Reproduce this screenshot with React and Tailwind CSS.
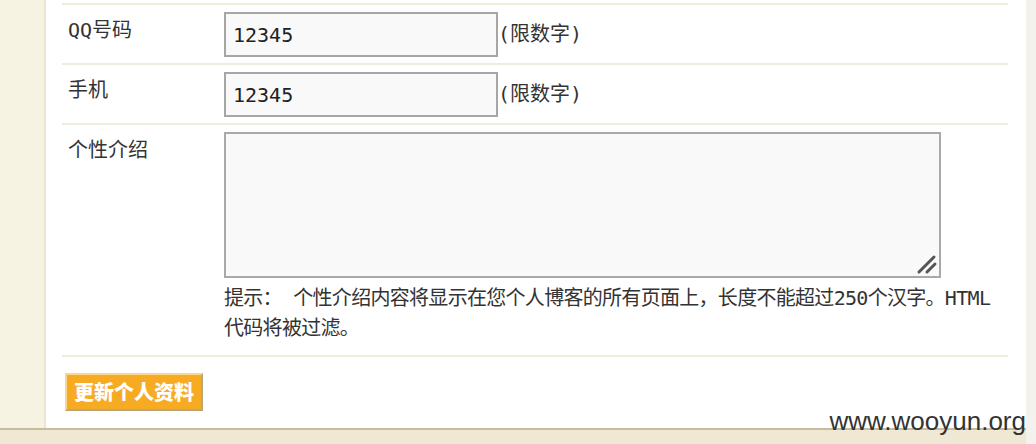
import React from 'react';

const font = { fontFamily: '"DejaVu Sans Mono", "Noto Sans CJK SC", monospace' };

function FieldRow({ label, children, last }) {
  return (
    <div className={`flex border-t-2 border-[#f0ecdc] ${last ? 'border-b-2' : ''}`}>
      <div className="w-[162px] shrink-0 pl-[6px] pt-[12px] text-[20px] leading-[26px] text-[#333]">
        {label}
      </div>
      <div className="flex-1 min-w-0">{children}</div>
    </div>
  );
}

function NumberField({ value }) {
  return (
    <div className="flex items-center pt-[7px] pb-[6px]">
      <input
        readOnly
        value={value}
        className="w-[274px] h-[45px] border-2 border-[#a6a6a6] bg-[#f9f9f9] px-[7px] text-[20px] text-[#222] font-['DejaVu_Sans_Mono',monospace] outline-none"
      />
      <span className="text-[20px] text-[#333] pb-[2px]">(限数字)</span>
    </div>
  );
}

export default function App() {
  return (
    <div className="flex h-[444px] w-full overflow-hidden bg-white" style={font}>
      <div className="flex flex-1 flex-col">
        <div className="flex flex-1 min-h-0">
          <div className="w-[46px] shrink-0 bg-[#f7f3e3] border-r-2 border-[#ece6d0]" />
          <div className="relative flex-1 bg-white pl-[16px] pr-[18px] pt-[3px]">
            <FieldRow label="QQ号码">
              <NumberField value="12345" />
            </FieldRow>
            <FieldRow label="手机">
              <NumberField value="12345" />
            </FieldRow>
            <FieldRow label="个性介绍" last>
              <div className="pt-[7px] pb-[12px]">
                <div className="relative w-[717px] h-[146px]">
                  <textarea
                    readOnly
                    className="block w-full h-full resize-none border-2 border-[#a9a9a9] bg-[#f9f9f9] outline-none"
                  />
                  <svg className="absolute right-[3px] bottom-[3px]" width="22" height="22" viewBox="0 0 22 22">
                    <path d="M3 19 L18 4 M11 19 L19 11" stroke="#555" strokeWidth="3" strokeLinecap="round" />
                  </svg>
                </div>
                <p className="mt-[5px] text-[20px] leading-[30px] tracking-[-0.7px] text-[#333]">
                  提示： 个性介绍内容将显示在您个人博客的所有页面上，长度不能超过250个汉字。HTML代码将被过滤。
                </p>
              </div>
            </FieldRow>
            <div className="pt-[16px] pl-[3px]">
              <button className="h-[38px] px-[7px] bg-[#f7ab22] border-2 border-t-[#fcd58e] border-l-[#fcd58e] border-b-[#b9a77c] border-r-[#b9a77c] text-white font-black text-[20px] leading-none font-['Noto_Sans_CJK_SC',sans-serif]">
                更新个人资料
              </button>
            </div>
            <div className="absolute right-0 bottom-[-6px] text-[26px] text-[#333] font-['Liberation_Sans',sans-serif] leading-none">
              www.wooyun.org
            </div>
          </div>
        </div>
        <div className="h-[16px] shrink-0 bg-[#efe8d4] border-t-2 border-[#c6bd9f]" />
      </div>
      <div className="w-[10px] shrink-0 bg-[#f4f2ed]" />
    </div>
  );
}
